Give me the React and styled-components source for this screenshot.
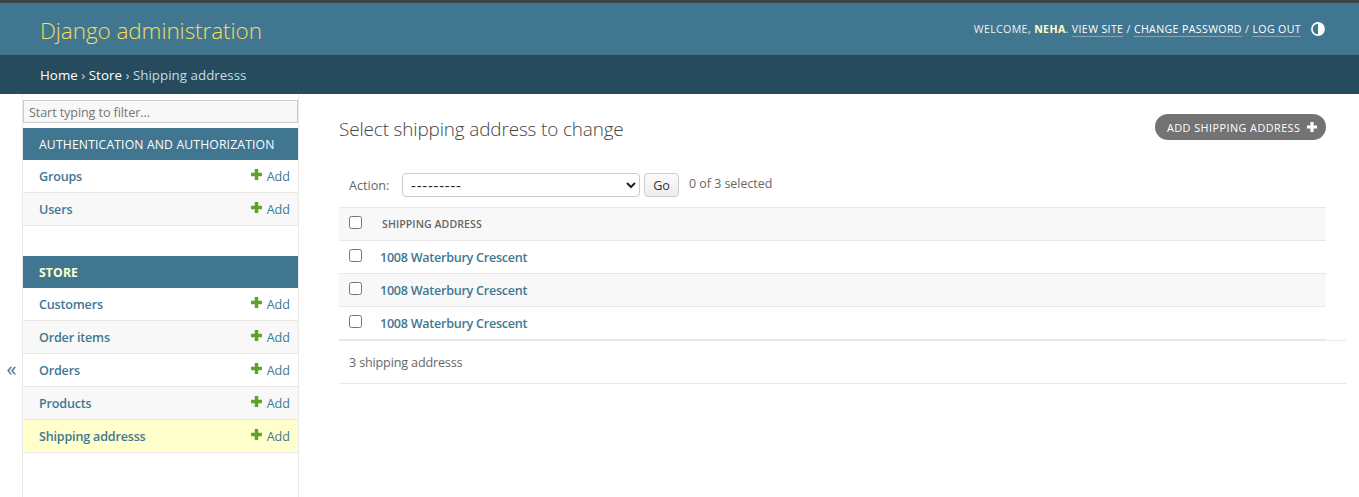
import React from "react";
import styled, { createGlobalStyle } from "styled-components";

const GlobalStyle = createGlobalStyle`
  *, *::before, *::after { box-sizing: border-box; }
  body {
    margin: 0;
    background: #fff;
    color: #666;
    font: 12.6px/17px "Segoe UI", "Open Sans", "Noto Sans", sans-serif;
    white-space: nowrap;
    overflow: hidden;
  }
  a { text-decoration: none; color: #417893; }
  h1, p { margin: 0; }
`;

const Page = styled.div`
  display: flex;
  flex-direction: column;
  height: 497px;
`;

const Header = styled.header`
  display: flex;
  justify-content: space-between;
  height: 55px;
  padding: 0 34px 0 40px;
  border-top: 3px solid #3b4546;
  background: #417690;
`;

const Brand = styled.a`
  padding-top: 12px;
  color: #f5dd5d;
  font-size: 22.5px;
  font-weight: 300;
  line-height: 32px;
  letter-spacing: -0.07px;
`;

const UserTools = styled.div`
  display: flex;
  align-items: flex-start;
  padding-top: 18px;
  color: #e9f3ea;
  font-size: 10.6px;
  line-height: 16px;
  letter-spacing: 0.37px;
  text-transform: uppercase;
  white-space: pre;
`;

const UserName = styled.strong`
  color: #ffffcc;
  font-weight: 700;
`;

const ToolLink = styled.a`
  height: 16px;
  border-bottom: 1px solid rgba(255, 255, 255, 0.35);
  color: #fff;
`;

const ThemeIcon = styled.svg`
  width: 14px;
  height: 14px;
  margin: 1px 0 0 10px;
`;

const Breadcrumbs = styled.nav`
  height: 39px;
  padding: 12px 40px;
  background: #264b5d;
  color: #c4dce8;
  font-size: 13.3px;
  letter-spacing: 0.04px;
  a { color: #fff; font-weight: 500; }
`;

const Main = styled.div`
  display: flex;
  flex: 1;
  min-height: 0;
`;

const SidebarToggle = styled.button`
  display: flex;
  align-items: center;
  justify-content: center;
  width: 23px;
  padding: 147px 0 0 1px;
  border: 0;
  border-right: 1px solid #eaeaea;
  background: #fff;
  color: #417690;
  font: 20px/20px "Open Sans", sans-serif;
`;

const Sidebar = styled.nav`
  width: 276px;
  padding-top: 6px;
  border-right: 1px solid #eaeaea;
`;

const FilterInput = styled.input`
  display: block;
  width: 275px;
  height: 23px;
  margin-bottom: 5px;
  padding: 1px 5px 0;
  border: 1px solid #ccc;
  border-radius: 0;
  background: #f8f8f8;
  font: inherit;
  letter-spacing: -0.1px;
  &::placeholder { color: #757575; }
`;

const Module = styled.section`
  margin-bottom: 30px;
`;

const ModuleTitle = styled.a`
  display: block;
  height: 32px;
  padding: 8px 16px;
  background: #417690;
  color: ${(p) => (p.$current ? "#ffffcc" : "#fff")};
  font-size: 12.2px;
  font-weight: ${(p) => (p.$current ? 700 : 400)};
  letter-spacing: 0.15px;
  text-transform: uppercase;
`;

const ModelRow = styled.div`
  display: flex;
  justify-content: space-between;
  height: 33px;
  padding: 8px 8px 0 16px;
  border-bottom: 1px solid #e8e8e8;
  background: ${(p) => (p.$current ? "#ffffcc" : p.$shaded ? "#f8f8f8" : "#fff")};
`;

const ModelLink = styled.a`
  font-weight: 600;
  letter-spacing: -0.2px;
`;

const AddLink = styled.a`
  display: flex;
  gap: 4px;
`;

const Content = styled.main`
  flex: 1;
  padding: 20px 13px 0 40px;
`;

const TitleBar = styled.div`
  display: flex;
  justify-content: space-between;
  height: 59px;
  margin-right: 20px;
`;

const Title = styled.h1`
  padding-top: 3px;
  font-size: 18.9px;
  font-weight: 300;
  line-height: 24px;
  letter-spacing: -0.13px;
  color: #444;
`;

const AddButton = styled.a`
  display: flex;
  align-items: center;
  justify-content: space-between;
  width: 171px;
  height: 26px;
  padding: 0 8px 0 12px;
  border-radius: 13px;
  background: #737373;
  color: #fff;
  font-size: 10.8px;
  letter-spacing: 0.47px;
  text-transform: uppercase;
`;

const Actions = styled.div`
  display: flex;
  align-items: flex-start;
  height: 34px;
  padding-left: 10px;
`;

const ActionLabel = styled.label`
  width: 53px;
  padding-top: 4px;
`;

const ActionSelect = styled.select`
  width: 238px;
  height: 24px;
  padding: 0 4px;
  border: 1px solid #ccc;
  border-radius: 4px;
  background: #fff;
  color: #222;
  font: 15px "Open Sans", sans-serif;
  letter-spacing: 0.8px;
`;

const GoButton = styled.button`
  width: 35px;
  height: 24px;
  margin: 0 10px 0 4px;
  padding: 0;
  border: 1px solid #ccc;
  border-radius: 4px;
  background: linear-gradient(#fbfbfb, #ededed);
  color: #333;
  font: inherit;
`;

const Counter = styled.span`
  padding-top: 2px;
  font-size: 12.4px;
`;

const Results = styled.div`
  margin-right: 20px;
  border-top: 1px solid #e8e8e8;
`;

const ResultRow = styled.div`
  display: flex;
  height: 33px;
  padding: 8px 10px 0;
  border-bottom: 1px solid #e8e8e8;
  background: ${(p) => (p.$shaded ? "#f8f8f8" : "#fff")};
`;

const Checkbox = styled.input`
  width: 13px;
  height: 13px;
  margin: 0 18px 0 0;
`;

const ColumnHeading = styled.span`
  padding-left: 2px;
  font-size: 10.6px;
  font-weight: 600;
  letter-spacing: 0.06px;
  text-transform: uppercase;
`;

const ResultLink = styled.a`
  font-weight: 600;
  letter-spacing: -0.28px;
`;

const Paginator = styled.p`
  height: 44px;
  padding: 13px 10px;
  border-top: 1px solid #e8e8e8;
  border-bottom: 1px solid #e8e8e8;
  letter-spacing: -0.16px;
`;

const Plus = ({ size, color }) => (
  <svg width={size} height={size} viewBox="0 0 12 12" fill={color}>
    <path d="M4.4 1h3.2v3.4H11v3.2H7.6V11H4.4V7.6H1V4.4h3.4z" />
  </svg>
);

const modules = [
  { name: "Authentication and Authorization", models: ["Groups", "Users"] },
  {
    name: "Store",
    current: true,
    models: ["Customers", "Order items", "Orders", "Products", "Shipping addresss"],
  },
];

const addresses = ["1008 Waterbury Crescent", "1008 Waterbury Crescent", "1008 Waterbury Crescent"];

export default function App() {
  return (
    <Page>
      <GlobalStyle />
      <Header>
        <Brand>Django administration</Brand>
        <UserTools>
          <span>Welcome, </span>
          <UserName>Neha</UserName>
          <span>. </span>
          <ToolLink>View site</ToolLink>
          <span> / </span>
          <ToolLink>Change password</ToolLink>
          <span> / </span>
          <ToolLink>Log out</ToolLink>
          <ThemeIcon viewBox="0 0 14 14">
            <circle cx="7" cy="7" r="6.1" fill="none" stroke="#fff" strokeWidth="1.6" />
            <path d="M7 1a6 6 0 0 1 0 12z" fill="#fff" />
          </ThemeIcon>
        </UserTools>
      </Header>
      <Breadcrumbs>
        <a>Home</a> › <a>Store</a> › Shipping addresss
      </Breadcrumbs>
      <Main>
        <SidebarToggle>«</SidebarToggle>
        <Sidebar>
          <FilterInput placeholder="Start typing to filter..." />
          {modules.map((m) => (
            <Module key={m.name}>
              <ModuleTitle $current={m.current}>{m.name}</ModuleTitle>
              {m.models.map((model, i) => (
                <ModelRow key={model} $shaded={i % 2 === 1} $current={model === "Shipping addresss"}>
                  <ModelLink>{model}</ModelLink>
                  <AddLink>
                    <Plus size={13} color="#5fa225" />
                    Add
                  </AddLink>
                </ModelRow>
              ))}
            </Module>
          ))}
        </Sidebar>
        <Content>
          <TitleBar>
            <Title>Select shipping address to change</Title>
            <AddButton>
              Add shipping address
              <Plus size={12} color="#fff" />
            </AddButton>
          </TitleBar>
          <Actions>
            <ActionLabel>Action:</ActionLabel>
            <ActionSelect>
              <option>---------</option>
            </ActionSelect>
            <GoButton>Go</GoButton>
            <Counter>0 of 3 selected</Counter>
          </Actions>
          <Results>
            <ResultRow $shaded>
              <Checkbox type="checkbox" />
              <ColumnHeading>Shipping address</ColumnHeading>
            </ResultRow>
            {addresses.map((address, i) => (
              <ResultRow key={i} $shaded={i % 2 === 1}>
                <Checkbox type="checkbox" />
                <ResultLink>{address}</ResultLink>
              </ResultRow>
            ))}
          </Results>
          <Paginator>3 shipping addresss</Paginator>
        </Content>
      </Main>
    </Page>
  );
}
